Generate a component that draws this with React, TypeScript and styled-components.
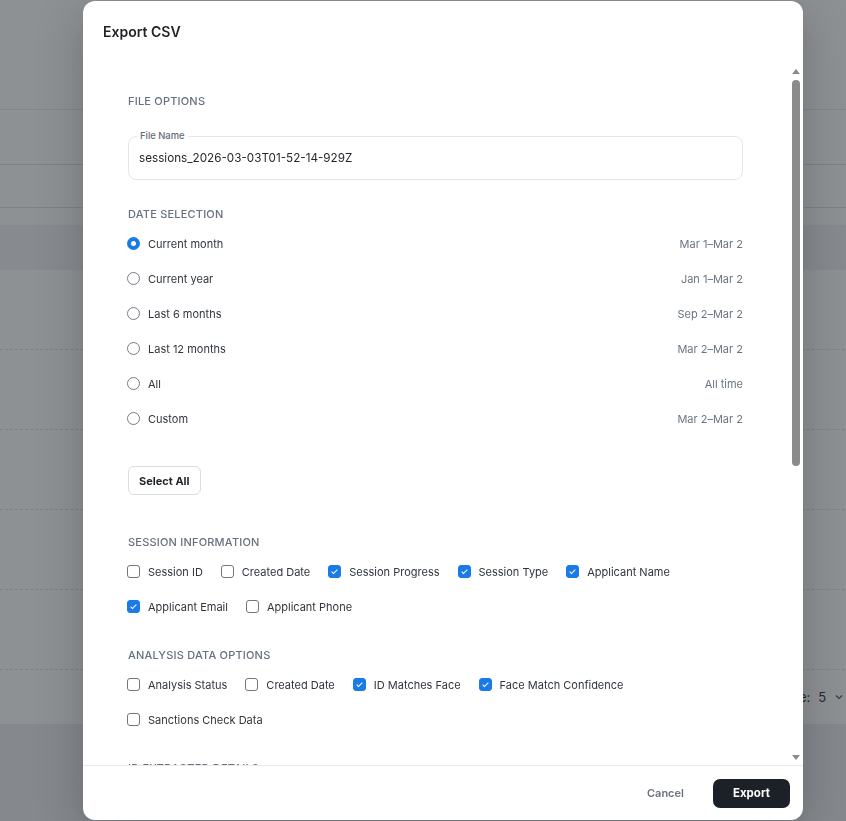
import { useEffect, useRef, useState } from "react";
import styled, { createGlobalStyle } from "styled-components";

const GlobalStyle = createGlobalStyle`
    * {
        box-sizing: border-box;
    }
    html,
    body {
        margin: 0;
        padding: 0;
        overflow: hidden;
    }
    body {
        font-family: Inter, "Noto Sans", "Liberation Sans", sans-serif;
        color: #2b3138;
    }
`;

/* ---------- page behind the dialog ---------- */

const Page = styled.div`
    width: 1060px;
    height: 100vh;
    background: #eceef1;
    display: flex;
    flex-direction: column;
`;

const TopBar = styled.div`
    height: 110px;
    background: #fff;
    border-bottom: 1px solid #e7e9ec;
`;

const Toolbar = styled.div<{ $h: number }>`
    height: ${(p) => p.$h}px;
    background: #fff;
    border-bottom: 1px solid #dde0e4;
`;

const Spacer = styled.div`
    height: 17px;
    background: #fff;
`;

const TableHead = styled.div`
    height: 45px;
    background: #f1f2f4;
`;

const TableRow = styled.div`
    height: 80px;
    background: #fff;
    border-bottom: 1px dashed #dadee3;
`;

const Pagination = styled.div`
    height: 54px;
    background: #fff;
    display: flex;
    align-items: center;
    justify-content: flex-end;
    gap: 14px;
    padding-right: 40px;
    font-size: 13px;
    color: #2b3138;
`;

const PageSize = styled.span`
    display: flex;
    align-items: center;
    gap: 8px;
    margin-right: 106px;
`;

/* ---------- dialog ---------- */

const Backdrop = styled.div`
    position: fixed;
    inset: 0;
    background: rgba(30, 36, 42, 0.5);
    display: flex;
    align-items: center;
    justify-content: center;
    padding: 1px 0 1px 40px;
`;

const Dialog = styled.div`
    width: 720px;
    height: 100%;
    background: #fff;
    border-radius: 12px;
    box-shadow: 0 12px 48px rgba(0, 0, 0, 0.22);
    display: flex;
    flex-direction: column;
    overflow: hidden;
`;

const Header = styled.div`
    height: 60px;
    flex-shrink: 0;
    display: flex;
    align-items: center;
    padding: 0 20px;
    font-size: 14px;
    font-weight: 600;
    color: #1f2328;
`;

const ScrollArea = styled.div`
    position: relative;
    flex: 1;
    min-height: 0;
    display: flex;
`;

const Body = styled.div`
    flex: 1;
    min-height: 0;
    overflow-y: auto;
    padding: 32px 60px 48px 45px;
    display: flex;
    flex-direction: column;
    gap: 23px;
    scrollbar-width: none;
    &::-webkit-scrollbar {
        display: none;
    }
`;

// drawn scrollbar (the native one is hidden in the capture)
const Rail = styled.div`
    position: absolute;
    top: 8px;
    bottom: 5px;
    right: 2px;
    width: 10px;
    display: flex;
    flex-direction: column;
    align-items: center;
    pointer-events: none;
`;

const Arrow = styled.div<{ $down?: boolean }>`
    width: 0;
    height: 0;
    border-left: 4px solid transparent;
    border-right: 4px solid transparent;
    ${(p) =>
        p.$down
            ? "border-top: 5px solid #8b8b8b;"
            : "border-bottom: 5px solid #8b8b8b;"}
    flex-shrink: 0;
`;

const Track = styled.div`
    position: relative;
    flex: 1;
    width: 100%;
    margin: 6px 0;
`;

const Thumb = styled.div`
    position: absolute;
    left: 1px;
    right: 1px;
    border-radius: 4px;
    background: #8b8b8b;
`;

const Section = styled.section`
    display: flex;
    flex-direction: column;
    flex-shrink: 0;
`;

const SectionTitle = styled.div<{ $gap?: number }>`
    font-size: 11px;
    line-height: 16px;
    font-weight: 500;
    letter-spacing: 0.2px;
    text-transform: uppercase;
    color: #66717d;
    margin-bottom: ${(p) => p.$gap ?? 4}px;
`;

const FieldBox = styled.div`
    position: relative;
    height: 44px;
    margin-bottom: 3px;
    border: 1px solid #e3e6ea;
    border-radius: 8px;
`;

const FloatingLabel = styled.label`
    position: absolute;
    top: -7px;
    left: 8px;
    padding: 0 3px;
    background: #fff;
    font-size: 9.4px;
    line-height: 12px;
    font-weight: 500;
    color: #5f6b78;
`;

const TextInput = styled.input`
    width: 100%;
    height: 100%;
    border: none;
    outline: none;
    background: transparent;
    padding: 0 10px;
    font-family: inherit;
    font-size: 11.7px;
    color: #23282e;
`;

const RadioRow = styled.label`
    display: flex;
    align-items: center;
    gap: 8px;
    height: 35px;
    font-size: 11px;
    color: #30363d;
    cursor: pointer;
`;

const Radio = styled.input`
    appearance: none;
    margin: 0 0 0 -1px;
    width: 13px;
    height: 13px;
    border-radius: 50%;
    border: 1px solid #767c84;
    background: #fff;
    &:checked {
        border: 4px solid #1a7ae6;
    }
`;

const DateHint = styled.span`
    margin-left: auto;
    font-size: 11px;
    color: #6b7580;
`;

const SelectAllButton = styled.button`
    align-self: flex-start;
    margin: 30px 0 16px;
    height: 29px;
    padding: 0 10px;
    border: 1px solid #d9dce0;
    border-radius: 6px;
    background: #fff;
    font-family: inherit;
    font-size: 11px;
    font-weight: 700;
    color: #1f2328;
    cursor: pointer;
`;

const CheckGroup = styled.div`
    display: flex;
    flex-wrap: wrap;
    column-gap: 19px;
`;

const CheckItem = styled.label`
    display: flex;
    align-items: center;
    gap: 8px;
    height: 35px;
    font-size: 11px;
    color: #30363d;
    cursor: pointer;
`;

const Check = styled.input`
    appearance: none;
    margin: 0 0 0 -1px;
    width: 13px;
    height: 13px;
    border-radius: 3px;
    border: 1px solid #6f7680;
    background: #fff;
    position: relative;
    &:checked {
        border-color: #1a7ae6;
        background: #1a7ae6;
    }
    &:checked::after {
        content: "";
        position: absolute;
        left: 4px;
        top: 2px;
        width: 2px;
        height: 5px;
        border-right: 1.5px solid #fff;
        border-bottom: 1.5px solid #fff;
        transform: rotate(45deg);
    }
`;

const Footer = styled.div`
    height: 55px;
    flex-shrink: 0;
    border-top: 1px solid #e8eaed;
    display: flex;
    align-items: center;
    justify-content: flex-end;
    gap: 13px;
    padding: 0 13px;
`;

const CancelButton = styled.button`
    border: none;
    background: none;
    padding: 8px 16px;
    font-family: inherit;
    font-size: 11px;
    font-weight: 600;
    color: #6b7280;
    cursor: pointer;
`;

const ExportButton = styled.button`
    height: 29px;
    padding: 0 20px;
    border: none;
    border-radius: 7px;
    background: #1c2128;
    color: #fff;
    font-family: inherit;
    font-size: 11.5px;
    font-weight: 700;
    cursor: pointer;
`;

const dateOptions = [
    { id: "month", label: "Current month", range: "Mar 1–Mar 2" },
    { id: "year", label: "Current year", range: "Jan 1–Mar 2" },
    { id: "6m", label: "Last 6 months", range: "Sep 2–Mar 2" },
    { id: "12m", label: "Last 12 months", range: "Mar 2–Mar 2" },
    { id: "all", label: "All", range: "All time" },
    { id: "custom", label: "Custom", range: "Mar 2–Mar 2" },
];

type Field = { key: string; label: string; on: boolean };

const initialGroups: { title: string; fields: Field[] }[] = [
    {
        title: "Session Information",
        fields: [
            { key: "sessionId", label: "Session ID", on: false },
            { key: "createdDate", label: "Created Date", on: false },
            { key: "sessionProgress", label: "Session Progress", on: true },
            { key: "sessionType", label: "Session Type", on: true },
            { key: "applicantName", label: "Applicant Name", on: true },
            { key: "applicantEmail", label: "Applicant Email", on: true },
            { key: "applicantPhone", label: "Applicant Phone", on: false },
        ],
    },
    {
        title: "Analysis Data Options",
        fields: [
            { key: "analysisStatus", label: "Analysis Status", on: false },
            { key: "analysisCreated", label: "Created Date", on: false },
            { key: "idMatchesFace", label: "ID Matches Face", on: true },
            { key: "faceMatch", label: "Face Match Confidence", on: true },
            { key: "sanctions", label: "Sanctions Check Data", on: false },
        ],
    },
    {
        title: "ID Extracted Details",
        fields: [
            { key: "firstName", label: "First Name", on: true },
            { key: "lastName", label: "Last Name", on: true },
            { key: "dob", label: "Date of Birth", on: false },
            { key: "docNumber", label: "Document Number", on: false },
            { key: "docType", label: "Document Type", on: false },
            { key: "expiry", label: "Expiry Date", on: false },
            { key: "issueDate", label: "Issue Date", on: false },
            { key: "nationality", label: "Nationality", on: false },
            { key: "issuingCountry", label: "Issuing Country", on: false },
            { key: "address", label: "Address", on: false },
            { key: "gender", label: "Gender", on: false },
        ],
    },
    {
        title: "Document Images",
        fields: [
            { key: "front", label: "Front Image", on: false },
            { key: "back", label: "Back Image", on: false },
            { key: "selfie", label: "Selfie Image", on: false },
            { key: "liveness", label: "Liveness Video", on: false },
            { key: "imageQuality", label: "Image Quality", on: false },
            { key: "tamper", label: "Tamper Detection", on: false },
        ],
    },
    {
        title: "Risk & Compliance",
        fields: [
            { key: "riskScore", label: "Risk Score", on: false },
            { key: "pep", label: "PEP Check", on: false },
            { key: "adverseMedia", label: "Adverse Media", on: false },
            { key: "watchlist", label: "Watchlist Matches", on: false },
            { key: "fraudSignals", label: "Fraud Signals", on: false },
            { key: "duplicate", label: "Duplicate Detection", on: false },
        ],
    },
    {
        title: "Device Information",
        fields: [
            { key: "ip", label: "IP Address", on: false },
            { key: "device", label: "Device Type", on: false },
            { key: "browser", label: "Browser", on: false },
            { key: "os", label: "Operating System", on: false },
            { key: "location", label: "Location", on: false },
            { key: "vpn", label: "VPN Detected", on: false },
        ],
    },
    {
        title: "Review",
        fields: [
            { key: "reviewer", label: "Reviewer", on: false },
            { key: "reviewDate", label: "Review Date", on: false },
            { key: "decision", label: "Decision", on: false },
            { key: "notes", label: "Notes", on: false },
        ],
    },
];

export default function App() {
    const [fileName, setFileName] = useState(
        "sessions_2026-03-03T01-52-14-929Z"
    );
    const [range, setRange] = useState("month");
    const [groups, setGroups] = useState(initialGroups);
    const bodyRef = useRef<HTMLDivElement>(null);
    const [scroll, setScroll] = useState({ top: 0, ratio: 0.57 });

    const measure = () => {
        const el = bodyRef.current;
        if (!el) return;
        setScroll({
            top: el.scrollTop / el.scrollHeight,
            ratio: Math.min(1, el.clientHeight / el.scrollHeight),
        });
    };

    useEffect(() => {
        measure();
        window.addEventListener("resize", measure);
        return () => window.removeEventListener("resize", measure);
    }, []);

    const toggle = (gi: number, key: string) => {
        setGroups((prev) =>
            prev.map((g, i) =>
                i !== gi
                    ? g
                    : {
                          ...g,
                          fields: g.fields.map((f) =>
                              f.key === key ? { ...f, on: !f.on } : f
                          ),
                      }
            )
        );
    };

    const selectAll = () => {
        setGroups((prev) =>
            prev.map((g) => ({
                ...g,
                fields: g.fields.map((f) => ({ ...f, on: true })),
            }))
        );
    };

    return (
        <>
            <GlobalStyle />
            <Page>
                <TopBar />
                <Toolbar $h={55} />
                <Toolbar $h={43} />
                <Spacer />
                <TableHead />
                <TableRow />
                <TableRow />
                <TableRow />
                <TableRow />
                <TableRow />
                <Pagination>
                    <PageSize>
                        Rows per page: <span>5</span>
                        <svg width="10" height="10" viewBox="0 0 10 10">
                            <path
                                d="M2 3.5 5 6.5 8 3.5"
                                fill="none"
                                stroke="#555"
                                strokeWidth="1.2"
                            />
                        </svg>
                    </PageSize>
                    <span>1–5 of 20</span>
                </Pagination>
            </Page>

            <Backdrop>
                <Dialog role="dialog" aria-label="Export CSV">
                    <Header>Export CSV</Header>
                    <ScrollArea>
                        <Body ref={bodyRef} onScroll={measure}>
                            <Section>
                                <SectionTitle $gap={27}>File Options</SectionTitle>
                                <FieldBox>
                                    <FloatingLabel htmlFor="fileName">
                                        File Name
                                    </FloatingLabel>
                                    <TextInput
                                        id="fileName"
                                        value={fileName}
                                        onChange={(e) => setFileName(e.target.value)}
                                    />
                                </FieldBox>
                            </Section>

                            <Section>
                                <SectionTitle>Date Selection</SectionTitle>
                                {dateOptions.map((o) => (
                                    <RadioRow key={o.id}>
                                        <Radio
                                            type="radio"
                                            name="range"
                                            checked={range === o.id}
                                            onChange={() => setRange(o.id)}
                                        />
                                        {o.label}
                                        <DateHint>{o.range}</DateHint>
                                    </RadioRow>
                                ))}
                                <SelectAllButton type="button" onClick={selectAll}>
                                    Select All
                                </SelectAllButton>
                            </Section>

                            {groups.map((g, gi) => (
                                <Section key={g.title}>
                                    <SectionTitle>{g.title}</SectionTitle>
                                    <CheckGroup>
                                        {g.fields.map((f) => (
                                            <CheckItem key={f.key}>
                                                <Check
                                                    type="checkbox"
                                                    checked={f.on}
                                                    onChange={() => toggle(gi, f.key)}
                                                />
                                                {f.label}
                                            </CheckItem>
                                        ))}
                                    </CheckGroup>
                                </Section>
                            ))}
                        </Body>
                        {scroll.ratio < 1 && (
                            <Rail>
                                <Arrow />
                                <Track>
                                    <Thumb
                                        style={{
                                            top: `${scroll.top * 100}%`,
                                            height: `${scroll.ratio * 100}%`,
                                        }}
                                    />
                                </Track>
                                <Arrow $down />
                            </Rail>
                        )}
                    </ScrollArea>
                    <Footer>
                        <CancelButton type="button">Cancel</CancelButton>
                        <ExportButton type="button">Export</ExportButton>
                    </Footer>
                </Dialog>
            </Backdrop>
        </>
    );
}
